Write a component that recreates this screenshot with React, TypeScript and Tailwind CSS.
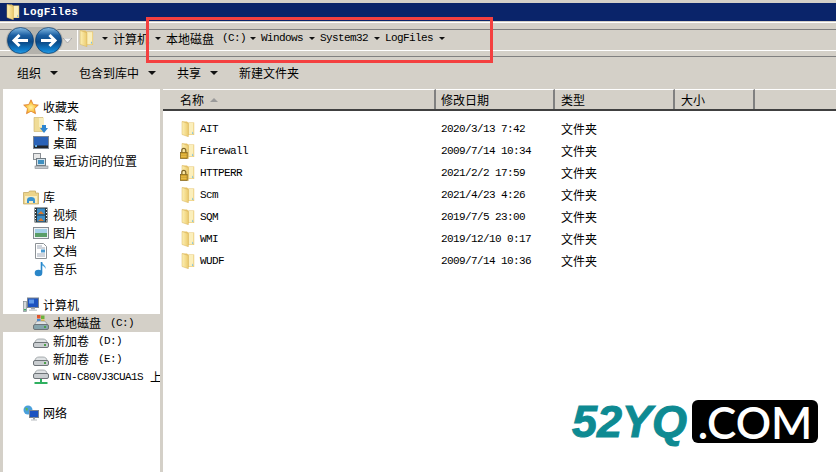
import React from "react";

const mono = "font-['Liberation_Mono','Noto_Sans_CJK_SC',monospace] text-[11px] tracking-[-0.6px]";

function Folder({ size = 16, lock = false }: { size?: number; lock?: boolean }) {
  return (
    <svg width={size} height={size} viewBox="0 0 16 16" className="shrink-0">
      <defs>
        <linearGradient id="fl" x1="0" y1="0" x2="1" y2="0">
          <stop offset="0" stopColor="#fdf0b4" />
          <stop offset="1" stopColor="#eccb6e" />
        </linearGradient>
      </defs>
      <path d="M2 .5h5l1 1h6.2v12.6L8 14z" fill="#e8c468" />
      <path d="M8.5 2h5v11.5h-5z" fill="#fbefbc" />
      <path d="M2 .5l6.4 2v13.2L2 13.5z" fill="url(#fl)" stroke="#d8b55c" strokeWidth="0.5" />
      <path d="M12.6 10.5l.8 2.2h-1.4z" fill="#5fb6e6" />
      {lock && (
        <g>
          <path d="M1.8 9.5V7.4a2 2 0 0 1 4 0v2.1" fill="none" stroke="#7e6426" strokeWidth="1.2" />
          <rect x="0.4" y="9.5" width="6.8" height="6" fill="#d2a22a" stroke="#7d5f16" strokeWidth="0.7" />
          <path d="M1 11.8h5.6M1 13.6h5.6" stroke="#f0cc5c" strokeWidth="0.7" />
        </g>
      )}
    </svg>
  );
}

function Arrow({ w = 6, h = 3 }: { w?: number; h?: number }) {
  return (
    <svg width={w} height={h} viewBox={`0 0 ${w} ${h}`} className="shrink-0">
      <path d={`M0 0h${w}L${w / 2} ${h}z`} fill="#111" />
    </svg>
  );
}

function Nav({ dir }: { dir: "l" | "r" }) {
  return (
    <svg width="27" height="27" viewBox="0 0 27 27" className="shrink-0">
      <defs>
        <linearGradient id={"n" + dir} x1="0" y1="0" x2="0" y2="1">
          <stop offset="0" stopColor="#86bde6" />
          <stop offset="0.3" stopColor="#1c5fa2" />
          <stop offset="0.55" stopColor="#0b4884" />
          <stop offset="0.85" stopColor="#0f7cca" />
          <stop offset="1" stopColor="#2a9ce2" />
        </linearGradient>
      </defs>
      <circle cx="13.5" cy="13.5" r="13" fill={`url(#n${dir})`} stroke="#0b3a6a" strokeWidth="0.7" />
      <path
        d={dir === "l" ? "M21 13.5H7M12.5 8l-5.5 5.5 5.5 5.5" : "M6 13.5h14M14.5 8l5.5 5.5-5.5 5.5"}
        fill="none"
        stroke="#fff"
        strokeWidth="3"
      />
    </svg>
  );
}

const Star = () => (
  <svg width="16" height="16" viewBox="0 0 16 16">
    <defs>
      <radialGradient id="st" cx="0.5" cy="0.55" r="0.55">
        <stop offset="0" stopColor="#fff2a8" />
        <stop offset="0.6" stopColor="#fbc440" />
        <stop offset="1" stopColor="#ee8a24" />
      </radialGradient>
    </defs>
    <path d="M8 .8l2.2 4.7 5.1.6-3.8 3.5 1 5.1L8 12.2l-4.5 2.5 1-5.1L.7 6.1l5.1-.6z" fill="url(#st)" stroke="#dd8030" strokeWidth="0.8" />
  </svg>
);
const Download = () => (
  <svg width="16" height="16" viewBox="0 0 16 16">
    <path d="M1 .5h9v14H1z" fill="#f0dc97" stroke="#c9b06a" strokeWidth="0.6" />
    <path d="M6 1h5v9H6z" fill="#f8eebf" />
    <path d="M9 8h4v3h2l-4 5-4-5h2z" fill="#2f86d0" />
  </svg>
);
const Desktop = () => (
  <svg width="16" height="16" viewBox="0 0 16 16">
    <rect x="0.5" y="1.5" width="15" height="12" fill="#2a62b8" stroke="#7c8694" />
    <rect x="1" y="10.5" width="14" height="2.5" fill="#22262c" />
    <rect x="2" y="10" width="2" height="2" fill="#64b0e8" />
  </svg>
);
const Recent = () => (
  <svg width="16" height="16" viewBox="0 0 16 16">
    <rect x="0.5" y="0.5" width="7" height="6" fill="#e8e8e8" stroke="#8a8f94" />
    <rect x="3.5" y="5.5" width="9" height="7" fill="#cfe0ea" stroke="#6f7a82" />
    <rect x="5" y="7" width="6" height="4" fill="#3f8fc0" />
    <rect x="2" y="13" width="13" height="2.5" fill="#c4c8cc" stroke="#80868c" strokeWidth="0.6" />
  </svg>
);
const Library = () => (
  <svg width="16" height="16" viewBox="0 0 16 16">
    <path d="M.5 3.5h5l1-1.5h6v2h3v11H.5z" fill="#ecd48a" stroke="#bfa45c" strokeWidth="0.7" />
    <path d="M2 7h12v7H2z" fill="#f8edc0" />
    <path d="M4 14v-3a4 3 0 0 1 8 0v3h-2v-2H6v2z" fill="#3a93d0" />
  </svg>
);
const Video = () => (
  <svg width="16" height="16" viewBox="0 0 16 16">
    <rect x="1.5" y="0.5" width="13" height="15" fill="#2f3a3e" />
    <rect x="4" y="1.5" width="8" height="6" fill="#3c8ec8" />
    <rect x="4" y="8.5" width="8" height="6" fill="#3c8ec8" />
    <path d="M5 7l3-3 3 3zM5 14l3-3 3 3z" fill="#d9792f" />
    <path d="M2.5 2v1M2.5 5v1M2.5 8v1M2.5 11v1M2.5 13.5v1M13.5 2v1M13.5 5v1M13.5 8v1M13.5 11v1M13.5 13.5v1" stroke="#fff" />
  </svg>
);
const Picture = () => (
  <svg width="16" height="16" viewBox="0 0 16 16">
    <rect x="0.5" y="2.5" width="15" height="11" fill="#eef2f4" stroke="#868c92" />
    <rect x="2" y="4" width="12" height="5" fill="#a5d0e8" />
    <rect x="2" y="8" width="12" height="4" fill="#5a9e68" />
  </svg>
);
const Doc = () => (
  <svg width="16" height="16" viewBox="0 0 16 16">
    <path d="M2.5.5h8l3 3v12h-11z" fill="#fff" stroke="#8d9296" />
    <path d="M4 3h5M4 5h8M4 11h8M4 13h8" stroke="#9ea8b6" />
    <rect x="8" y="6.5" width="4" height="3" fill="#4a9ad0" />
  </svg>
);
const Music = () => (
  <svg width="16" height="16" viewBox="0 0 16 16">
    <path d="M8.5 1v10.5" stroke="#2a86c8" strokeWidth="1.6" />
    <path d="M9 1c.5 3 4.5 3.5 3.5 7-.5-2-2-3-3.5-3.5z" fill="#4aa2dc" />
    <ellipse cx="5.5" cy="12" rx="3.8" ry="3.2" fill="#2a86c8" />
  </svg>
);
const Computer = () => (
  <svg width="16" height="16" viewBox="0 0 16 16">
    <rect x="0.5" y="4.5" width="3" height="10" fill="#d4d8da" stroke="#7f8a90" strokeWidth="0.7" />
    <rect x="1" y="12" width="2" height="1.5" fill="#3fae5e" />
    <rect x="4.5" y="1" width="11" height="9.5" fill="#1d53c0" stroke="#7a8490" />
    <rect x="6" y="2.5" width="5" height="4" fill="#5f9aea" />
    <rect x="8" y="10.5" width="4" height="2" fill="#a2a8ae" />
    <rect x="6" y="12.5" width="8" height="1.5" fill="#cdd1d4" />
  </svg>
);
const Drive = ({ win = false }: { win?: boolean }) => (
  <svg width="16" height="16" viewBox="0 0 16 16">
    {win && (
      <g>
        <rect x="4" y="0" width="3.5" height="3.5" fill="#e0542c" />
        <rect x="8" y="0.5" width="3.5" height="3.5" fill="#6cb23c" />
        <rect x="4" y="4" width="3.5" height="3.5" fill="#3d86d8" />
        <rect x="8" y="4.5" width="3.5" height="3.5" fill="#f0c030" />
      </g>
    )}
    <path d="M2 10c0-3 2-4 4-4h4c2 0 4 1 4 4z" fill="#dfe2e4" stroke="#8a9094" strokeWidth="0.7" />
    <rect x="0.5" y="9.5" width="15" height="5" rx="1.5" fill={win ? "#86a4ac" : "#c9cdd0"} stroke="#6e7478" />
    <rect x="11" y="11" width="2" height="2" fill="#4da04a" />
  </svg>
);
const NetDrive = () => (
  <svg width="16" height="16" viewBox="0 0 16 16">
    <path d="M2 5c0-3 2-4 4-4h4c2 0 4 1 4 4z" fill="#dfe2e4" stroke="#8a9094" strokeWidth="0.7" />
    <rect x="0.5" y="4.5" width="15" height="5" rx="1.5" fill="#c9cdd0" stroke="#6e7478" />
    <rect x="7" y="10" width="2" height="3" fill="#2fb060" />
    <rect x="1.5" y="13" width="13" height="2" fill="#2fb060" />
  </svg>
);
const Network = () => (
  <svg width="16" height="16" viewBox="0 0 16 16">
    <circle cx="5" cy="5" r="4.5" fill="#4aa0dc" />
    <path d="M2 2.5l3 1-1 3zM6 5l3 1-2 2z" fill="#5fb84a" />
    <rect x="6.5" y="5.5" width="9" height="7" fill="#1d53c0" stroke="#7a8490" />
    <rect x="10" y="12.5" width="2" height="2" fill="#9aa0a6" />
    <rect x="8" y="14.5" width="6" height="1" fill="#b8bcc0" />
  </svg>
);

function Parent({ icon, label }: { icon: React.ReactNode; label: string }) {
  return (
    <div className="flex h-[18px] items-center gap-1 pl-[20px]">
      <span className="flex w-4 shrink-0">{icon}</span>
      <span>{label}</span>
    </div>
  );
}

function Child({ icon, children, active }: { icon: React.ReactNode; children: React.ReactNode; active?: boolean }) {
  return (
    <div className={`flex h-[18px] items-center gap-1 overflow-hidden whitespace-nowrap pl-[30px] ${active ? "bg-[#d4d0c8]" : ""}`}>
      <span className="flex w-4 shrink-0">{icon}</span>
      <span className="flex items-center">{children}</span>
    </div>
  );
}

const rows = [
  ["AIT", "2020/3/13 7:42", false],
  ["Firewall", "2009/7/14 10:34", true],
  ["HTTPERR", "2021/2/2 17:59", true],
  ["Scm", "2021/4/23 4:26", false],
  ["SQM", "2019/7/5 23:00", false],
  ["WMI", "2019/12/10 0:17", false],
  ["WUDF", "2009/7/14 10:36", false],
] as const;

export default function App() {
  return (
    <div className="relative flex h-[472px] w-[836px] flex-col overflow-hidden bg-[#d4d0c8] font-['Noto_Sans_CJK_SC',sans-serif] text-[12px] leading-none text-black">
      {/* title bar */}
      <div className="mt-[3px] flex h-[18px] items-center gap-[2px] bg-[#0a246a] pl-[5px]">
        <Folder size={16} />
        <span className="font-['Liberation_Mono',monospace] text-[11px] font-bold tracking-[0.3px] text-white">LogFiles</span>
      </div>
      {/* address */}
      <div className="mt-px h-[7px] border-t border-white" />
      <div className="flex h-[22px] items-center border-y border-b-white border-t-[#808080] pl-[6px]">
        <div className="flex h-[27px] items-center gap-px rounded-full bg-[#b4b2ac] px-px">
          <Nav dir="l" />
          <Nav dir="r" />
        </div>
        <svg width="9" height="5" viewBox="0 0 9 5" className="mt-[1px]">
          <path d="M0 0h9L4.5 5z" fill="#f2f2f2" stroke="#8b8b8b" strokeWidth="0.6" />
        </svg>
        <div className="ml-[5px] flex h-full items-center border-l border-white pb-[3px]">
          <Folder size={17} />
          <span className="ml-[7px]"><Arrow /></span>
          <span className="ml-[5px] whitespace-nowrap">计算机</span>
          <span className="ml-[6px]"><Arrow /></span>
          <span className="ml-[5px]">本地磁盘</span>
          <span className={`${mono} ml-[8px]`}>(C:)</span>
          <span className="ml-[4px]"><Arrow /></span>
          <span className={`${mono} ml-[5px]`}>Windows</span>
          <span className="ml-[6px]"><Arrow /></span>
          <span className={`${mono} ml-[5px]`}>System32</span>
          <span className="ml-[6px]"><Arrow /></span>
          <span className={`${mono} ml-[5px]`}>LogFiles</span>
          <span className="ml-[6px]"><Arrow /></span>
        </div>
      </div>
      {/* toolbar */}
      <div className="mt-[5px] flex h-[33px] items-center border-t border-t-[#808080] pl-[17px]">
        <span>组织</span>
        <span className="ml-[9px]"><Arrow w={8} h={4} /></span>
        <span className="ml-[21px]">包含到库中</span>
        <span className="ml-[9px]"><Arrow w={8} h={4} /></span>
        <span className="ml-[21px]">共享</span>
        <span className="ml-[9px]"><Arrow w={8} h={4} /></span>
        <span className="ml-[21px]">新建文件夹</span>
      </div>
      {/* body */}
      <div className="flex min-h-0 flex-1 pl-[3px]">
        <aside className="flex w-[157px] shrink-0 flex-col bg-white pt-[9px]">
          <Parent icon={<Star />} label="收藏夹" />
          <Child icon={<Download />}>下载</Child>
          <Child icon={<Desktop />}>桌面</Child>
          <Child icon={<Recent />}>最近访问的位置</Child>
          <div className="h-[18px]" />
          <Parent icon={<Library />} label="库" />
          <Child icon={<Video />}>视频</Child>
          <Child icon={<Picture />}>图片</Child>
          <Child icon={<Doc />}>文档</Child>
          <Child icon={<Music />}>音乐</Child>
          <div className="h-[18px]" />
          <Parent icon={<Computer />} label="计算机" />
          <Child icon={<Drive win />} active>
            本地磁盘<span className={`${mono} ml-[9px]`}>(C:)</span>
          </Child>
          <Child icon={<Drive />}>
            新加卷<span className={`${mono} ml-[9px]`}>(D:)</span>
          </Child>
          <Child icon={<Drive />}>
            新加卷<span className={`${mono} ml-[9px]`}>(E:)</span>
          </Child>
          <Child icon={<NetDrive />}>
            <span className={mono}>WIN-C80VJ3CUA1S</span>
            <span className="ml-[7px]">上</span>
          </Child>
          <div className="h-[18px]" />
          <Parent icon={<Network />} label="网络" />
        </aside>
        <main className="ml-[3px] flex min-w-0 flex-1 flex-col bg-white">
          <div className="flex h-[22px] shrink-0 border-b-2 border-b-[#404040] bg-[#d4d0c8]">
            <div className="flex w-[273px] items-center border-t border-r-2 border-t-white border-r-[#808080] pl-[17px]">
              名称
              <svg width="8" height="4" viewBox="0 0 8 4" className="ml-[6px]">
                <path d="M4 0l4 4H0z" fill="#9a9a9a" />
              </svg>
            </div>
            <div className="flex w-[119px] items-center border-t border-r-2 border-t-white border-r-[#808080] pl-[5px]">修改日期</div>
            <div className="flex w-[120px] items-center border-t border-r-2 border-t-white border-r-[#808080] pl-[6px]">类型</div>
            <div className="flex w-[80px] items-center border-t border-r-2 border-t-white border-r-[#808080] pl-[6px]">大小</div>
            <div className="flex-1 border-t border-t-white" />
          </div>
          <div className="flex flex-col pt-[7px]">
            {rows.map(([name, date, lock]) => (
              <div key={name} className="flex h-[22px] items-center">
                <div className="flex w-[273px] items-center gap-[4px] pl-[17px]">
                  <Folder size={16} lock={lock} />
                  <span className={mono}>{name}</span>
                </div>
                <div className={`${mono} w-[119px] pl-[5px]`}>{date}</div>
                <div className="pl-[6px]">文件夹</div>
              </div>
            ))}
          </div>
        </main>
      </div>
      {/* red annotation */}
      <div className="absolute left-[146px] top-[17px] h-[46px] w-[347px] border-[3px] border-[#f44040]" />
      {/* watermark */}
      <div className="absolute left-[572px] top-[400px] flex items-center">
        <span className="w-[120px] font-['Liberation_Sans',sans-serif] text-[45px] font-bold italic leading-[42px] text-[#0e8a92] [-webkit-text-stroke:1px_#0e8a92]">52YQ</span>
        <span className="flex h-[43px] w-[126px] items-center justify-center rounded-[6px] bg-black font-['Lato',sans-serif] text-[44px] font-semibold leading-none text-white">.COM</span>
      </div>
    </div>
  );
}
